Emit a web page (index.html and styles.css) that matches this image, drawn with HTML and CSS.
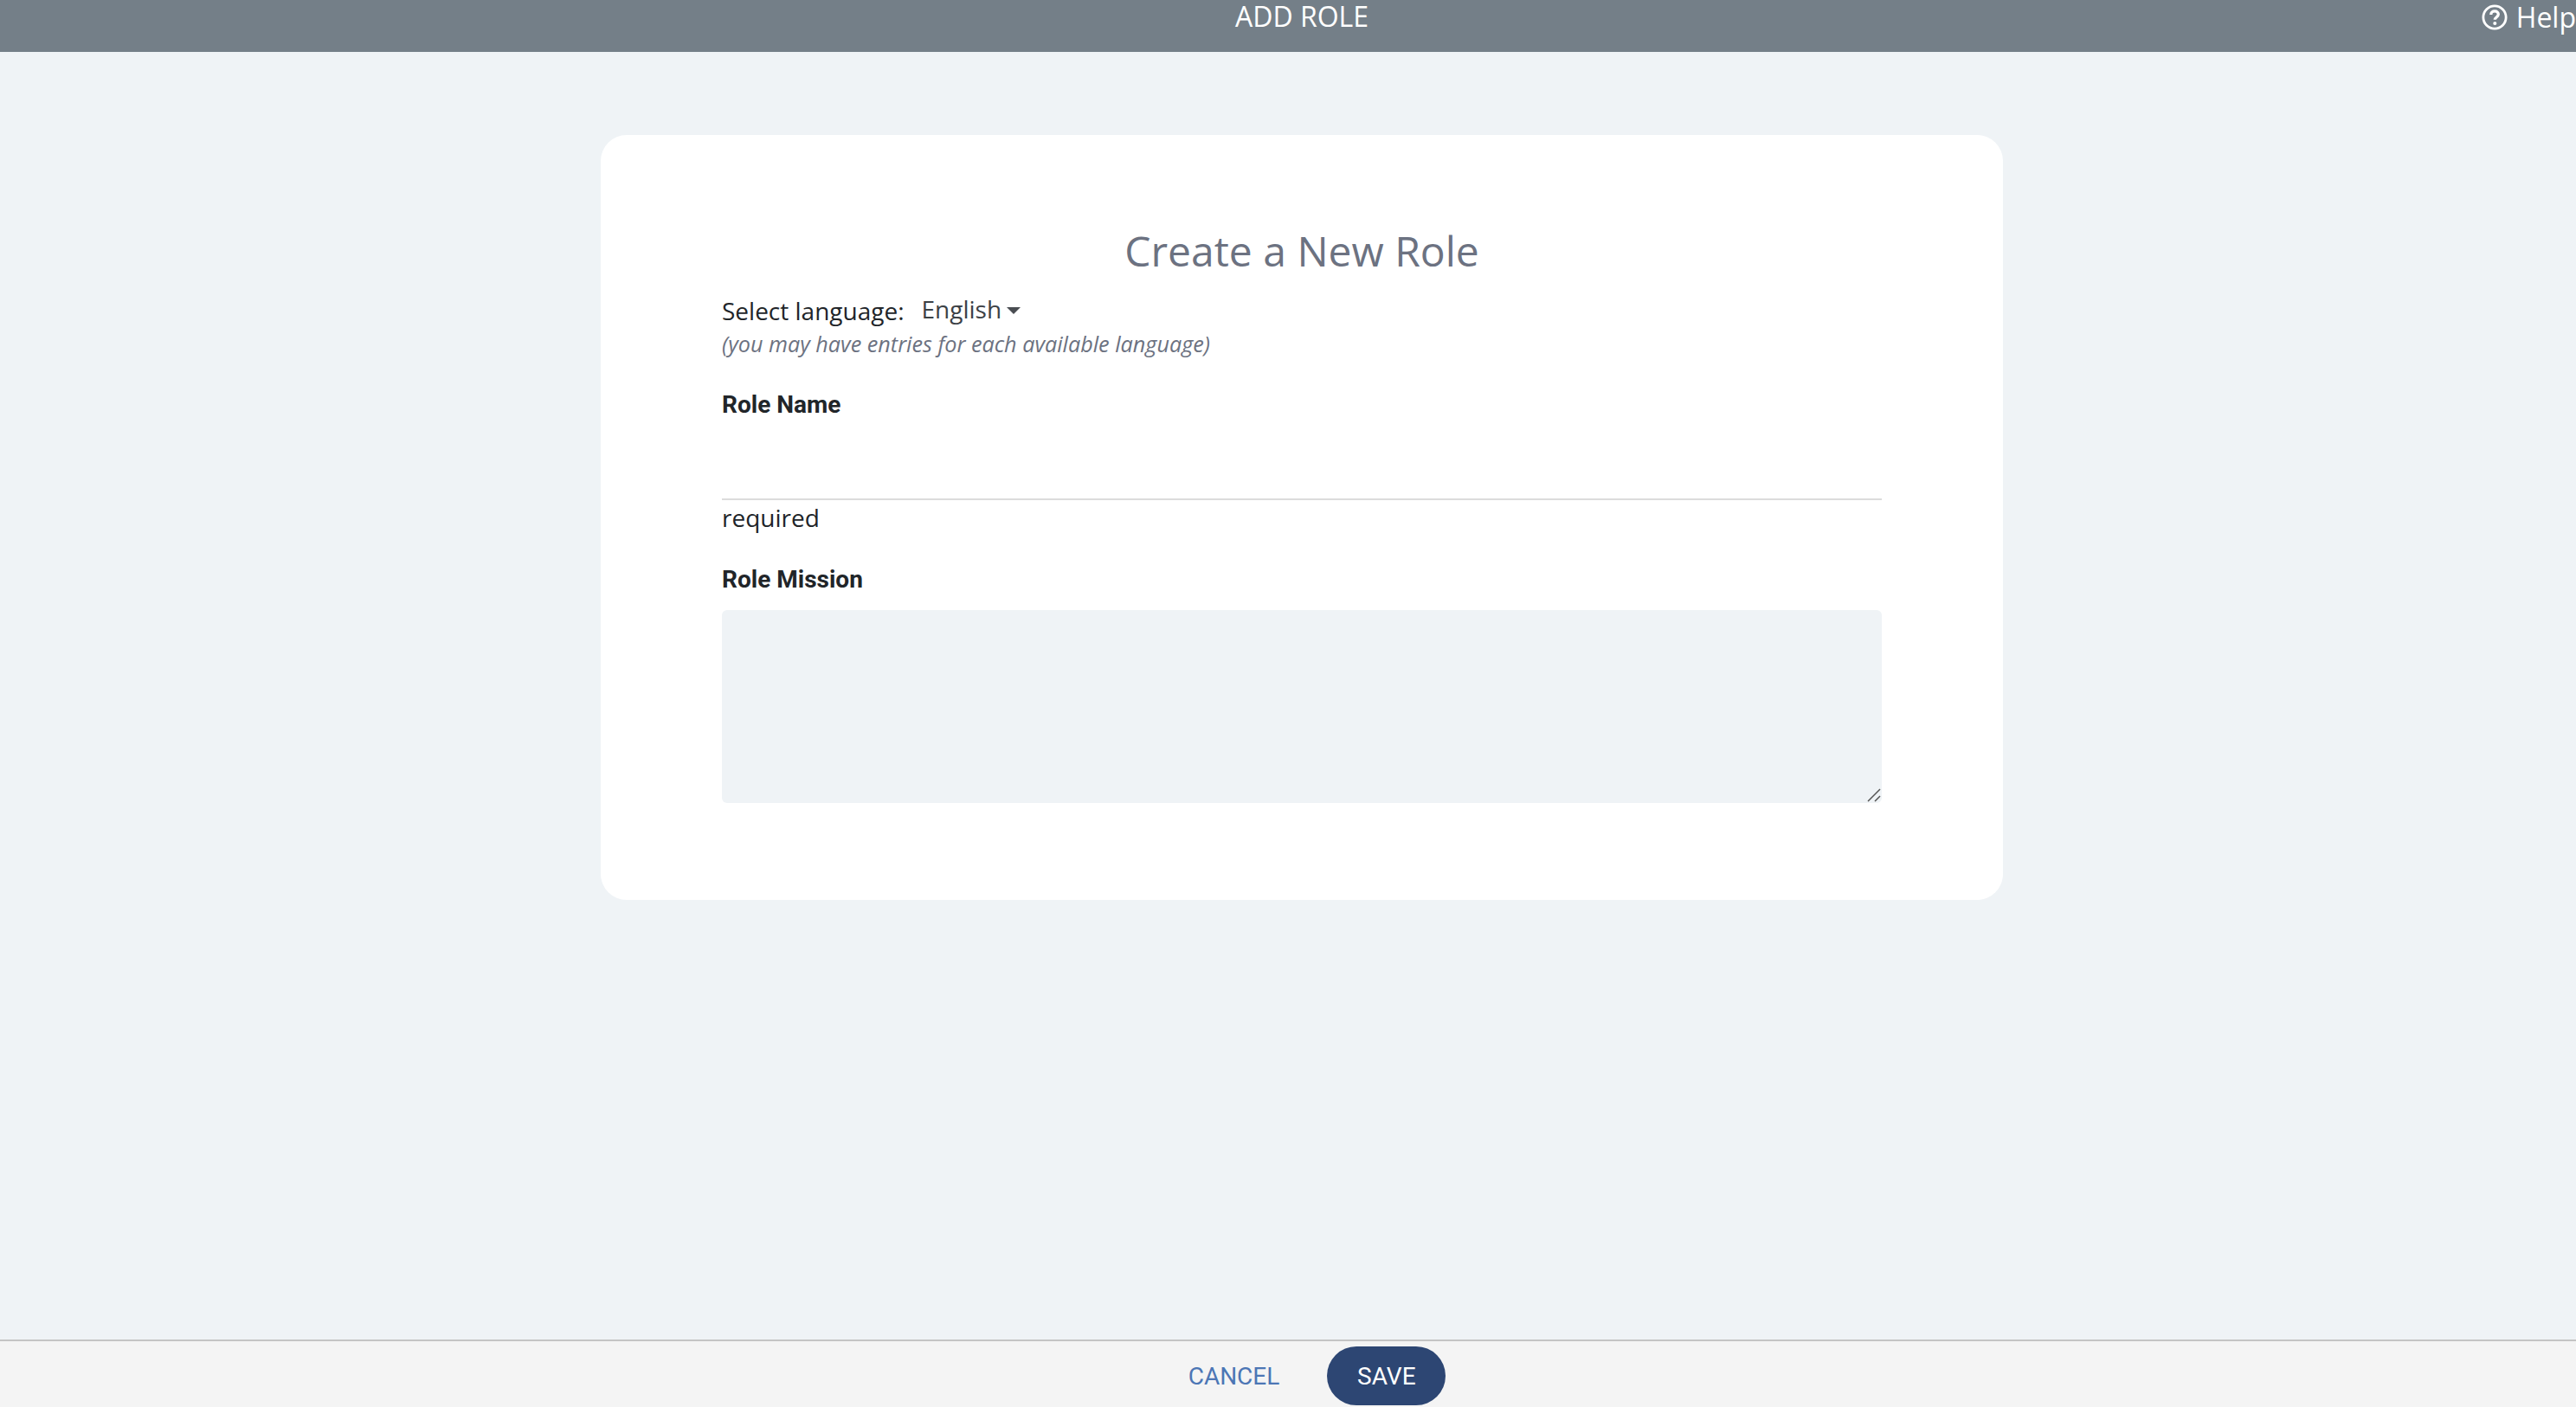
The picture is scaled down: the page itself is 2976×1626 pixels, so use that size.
FILE: index.html
```html
<!DOCTYPE html>
<html lang="en">
<head>
  <meta charset="UTF-8">
  <title>Add Role</title>
  <link rel="stylesheet" href="styles.css">
</head>
<body>
  <header class="topbar">
    <div class="topbar-title">ADD ROLE</div>
    <a class="help">
      <svg class="help-icon" viewBox="0 0 32 32">
        <circle cx="16" cy="16" r="14" fill="none" stroke="#fff" stroke-width="3"/>
        <path d="M11.500 12.800c0-2.700 2-4.300 4.600-4.300 2.600 0 4.500 1.500 4.500 3.800 0 3.300-4.300 3.400-4.300 6.700" fill="none" stroke="#fff" stroke-width="3.500"/>
        <circle cx="16.300" cy="23.500" r="2.200" fill="#fff"/>
      </svg>
      <span>Help</span>
    </a>
  </header>

  <main class="content">
    <section class="card">
      <h1 class="card-title">Create a New Role</h1>
      <div class="lang-row">
        <span class="lang-label">Select language:</span>
        <span class="lang-select">English<i class="caret"></i></span>
      </div>
      <div class="lang-note">(you may have entries for each available language)</div>
      <label class="field-label">Role Name</label>
      <div class="name-input"></div>
      <div class="hint">required</div>
      <label class="field-label mission-label">Role Mission</label>
      <div class="mission-wrap">
        <textarea class="mission"></textarea>
        <svg class="resizer" viewBox="0 0 16 16">
          <path d="M1 15L15 1M9 15L15 9" stroke="#555" stroke-width="1.500" fill="none"/>
        </svg>
      </div>
    </section>
  </main>

  <footer class="actions">
    <a class="cancel">CANCEL</a>
    <a class="save">SAVE</a>
  </footer>
</body>
</html>
```

FILE: styles.css
```css
* {
  box-sizing: border-box;
  margin: 0;
  padding: 0;
}
html {
  height: 100%;
  overflow: hidden;
  background: #eff3f6;
}
body {
  display: flex;
  flex-direction: column;
  width: 3008px;
  height: 100%;
  background: #eff3f6;
  font-family: "Open Sans", "Liberation Sans", sans-serif;
  color: #212529;
}
.topbar {
  display: flex;
  justify-content: center;
  height: 60px;
  flex: none;
  background: #747f88;
  color: #fff;
  position: relative;
}
.topbar-title {
  font-size: 32px;
  line-height: 38px;
  font-weight: 400;
}
.help {
  position: absolute;
  top: 0;
  right: 32px;
  display: flex;
  align-items: center;
  gap: 10px;
  font-size: 32px;
  line-height: 40px;
  font-weight: 400;
}
.help-icon {
  width: 30px;
  height: 30px;
}
.content {
  flex: 1;
  padding-top: 96px;
}
.card {
  display: flex;
  flex-direction: column;
  width: 1620px;
  height: 884px;
  margin: 0 auto;
  padding: 98px 140px 0;
  background: #fff;
  border-radius: 30px;
}
.card-title {
  font-size: 48px;
  line-height: 72px;
  font-weight: 400;
  color: #6c7281;
  text-align: center;
}
.lang-row {
  display: flex;
  align-items: center;
  gap: 20px;
  height: 44px;
  margin-top: 11px;
}
.lang-label {
  font-size: 28px;
}
.lang-select {
  display: flex;
  align-items: center;
  gap: 6px;
  font-size: 28px;
  color: #3c4146;
  margin-top: -4px;
}
.caret {
  margin-top: 4px;
  border-top: 8px solid #4a4d52;
  border-left: 8px solid transparent;
  border-right: 8px solid transparent;
}
.lang-note {
  font-size: 25.200px;
  line-height: 32px;
  font-style: italic;
  color: #6c7281;
}
.field-label {
  display: block;
  margin-top: 35px;
  font-family: Roboto, "Liberation Sans", sans-serif;
  font-size: 28px;
  line-height: 40px;
  font-weight: 700;
}
.name-input {
  height: 90px;
  border-bottom: 2px solid #dcdcdc;
}
.hint {
  margin-top: -1px;
  font-size: 28px;
  line-height: 42px;
}
.mission-label {
  margin-top: 31px;
}
.mission-wrap {
  position: relative;
  margin-top: 15px;
}
.mission {
  display: block;
  width: 100%;
  height: 223px;
  border: none;
  border-radius: 6px;
  outline: none;
  resize: none;
  background: #eff3f6;
}
.resizer {
  position: absolute;
  right: 1px;
  bottom: 1px;
  width: 16px;
  height: 16px;
}
.actions {
  display: flex;
  align-items: center;
  justify-content: center;
  gap: 55px;
  height: 78px;
  flex: none;
  padding: 4px 0 0 35px;
  border-top: 2px solid #c4c4c4;
  background: #f4f4f4;
  font-family: Roboto, "Liberation Sans", sans-serif;
  font-size: 28px;
}
.cancel {
  color: #4c76b5;
}
.save {
  display: flex;
  align-items: center;
  justify-content: center;
  width: 137px;
  height: 68px;
  border-radius: 34px;
  background: #2d4673;
  color: #fff;
}
```
